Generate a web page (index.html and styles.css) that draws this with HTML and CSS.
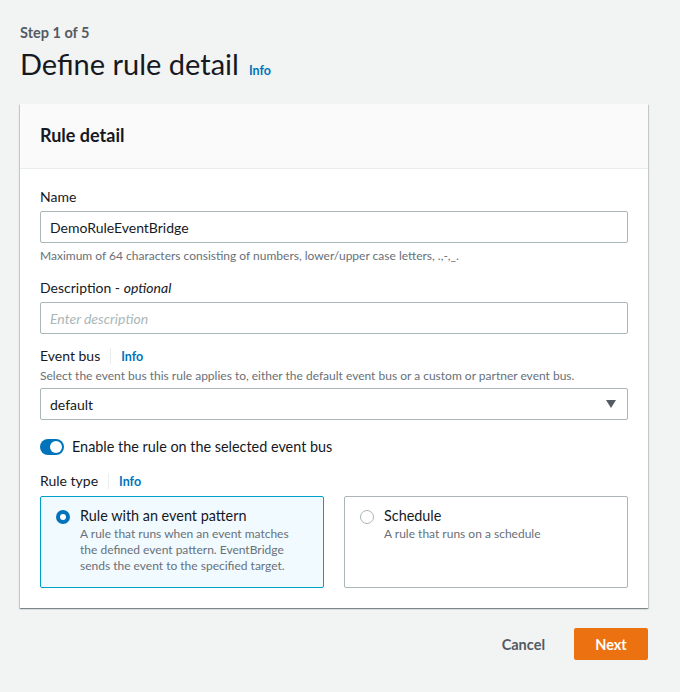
FILE: index.html
```html
<!DOCTYPE html>
<html lang="en">
<head>
<meta charset="utf-8">
<link rel="stylesheet" href="styles.css">
</head>
<body>
<div class="page">
  <div class="step">Step 1 of 5</div>
  <div class="title-row">
    <h1 class="title">Define rule detail</h1>
    <a class="info">Info</a>
  </div>

  <div class="panel">
    <div class="panel-header">
      <h2 class="panel-title">Rule detail</h2>
    </div>
    <div class="panel-body">
      <div class="field name">
        <div class="label">Name</div>
        <div class="input">DemoRuleEventBridge</div>
        <div class="hint">Maximum of 64 characters consisting of numbers, lower/upper case letters, .,-,_.</div>
      </div>

      <div class="field">
        <div class="label">Description - <i>optional</i></div>
        <div class="input placeholder">Enter description</div>
      </div>

      <div class="field">
        <div class="label-row"><span class="label">Event bus</span><span class="sep"></span><a class="info">Info</a></div>
        <div class="desc">Select the event bus this rule applies to, either the default event bus or a custom or partner event bus.</div>
        <div class="input select">
          <span>default</span>
          <svg class="caret" width="10" height="8" viewBox="0 0 10 8"><path d="M0 0h10L5 8z" fill="#545b64"/></svg>
        </div>
      </div>

      <div class="toggle-row">
        <span class="toggle"><span class="knob"></span></span>
        <span class="toggle-label">Enable the rule on the selected event bus</span>
      </div>

      <div class="field last">
        <div class="label-row"><span class="label">Rule type</span><span class="sep"></span><a class="info">Info</a></div>
        <div class="tiles">
          <div class="tile selected">
            <span class="radio on"></span>
            <div>
              <div class="tile-title">Rule with an event pattern</div>
              <div class="tile-desc">A rule that runs when an event matches the defined event pattern. EventBridge sends the event to the specified target.</div>
            </div>
          </div>
          <div class="tile">
            <span class="radio"></span>
            <div>
              <div class="tile-title">Schedule</div>
              <div class="tile-desc">A rule that runs on a schedule</div>
            </div>
          </div>
        </div>
      </div>
    </div>
  </div>

  <div class="actions">
    <a class="btn-link">Cancel</a>
    <a class="btn-primary">Next</a>
  </div>
</div>
</body>
</html>
```

FILE: styles.css
```css
* { box-sizing: border-box; }
html, body { margin: 0; padding: 0; }
body {
  background: #f2f3f3;
  font-family: Lato, "Open Sans", sans-serif;
  color: #16191f;
  font-size: 14px;
}
.page {
  width: 680px;
  padding: 24px 32px 0 20px;
}
.step {
  font-size: 14.5px;
  font-weight: 700;
  color: #545b64;
  line-height: 18px;
}
.title-row {
  display: flex;
  align-items: baseline;
  gap: 10px;
  margin-top: 4px;
}
.title {
  margin: 0;
  font-size: 29px;
  font-weight: 400;
  line-height: 36px;
  color: #16191f;
}
.info {
  color: #0073bb;
  font-size: 12.5px;
  font-weight: 700;
}
.panel {
  margin-top: 22px;
  background: #fff;
  box-shadow: 0 1px 1px 0 rgba(0,28,36,0.3), 1px 1px 1px 0 rgba(0,28,36,0.15), -1px 1px 1px 0 rgba(0,28,36,0.15);
  width: 628px;
}
.panel-header {
  background: #fafafa;
  border-bottom: 1px solid #eaeded;
  height: 65px;
  display: flex;
  align-items: center;
  padding: 0 20px;
}
.panel-title {
  margin: 0;
  font-size: 18px;
  font-weight: 700;
  line-height: 22px;
  margin-top: -2px;
}
.panel-body {
  padding: 18px 20px 20px;
}
.field { margin-bottom: 12px; }
.field.name { margin-bottom: 14px; }
.field.last { margin-bottom: 0; }
.label {
  font-size: 14px;
  line-height: 20px;
  color: #16191f;
  margin-bottom: 4px;
}
.label-row {
  display: flex;
  align-items: center;
  height: 20px;
}
.label-row .label { margin-bottom: 0; }
.sep {
  width: 1px;
  height: 16px;
  background: #eaeded;
  margin: 0 10px;
}
.input {
  height: 32px;
  border: 1px solid #aab7b8;
  border-radius: 2px;
  padding: 0 9px;
  display: flex;
  align-items: center;
  font-size: 14px;
  color: #16191f;
}
.placeholder {
  color: #aab7b8;
  font-style: italic;
}
.hint {
  font-size: 12px;
  color: #687078;
  line-height: 16px;
  margin-top: 5px;
}
.desc {
  font-size: 12px;
  color: #687078;
  line-height: 16px;
  margin: 2px 0 4px;
}
.select { justify-content: space-between; padding-right: 11px; }
.toggle-row {
  display: flex;
  align-items: center;
  gap: 8px;
  margin-top: 17px;
  margin-bottom: 14px;
}
.toggle {
  width: 24px;
  height: 16px;
  border-radius: 8px;
  background: #0073bb;
  position: relative;
}
.knob {
  position: absolute;
  right: 2px;
  top: 2px;
  width: 12px;
  height: 12px;
  border-radius: 50%;
  background: #fff;
}
.toggle-label { font-size: 14.4px; line-height: 20px; }
.tiles {
  display: grid;
  grid-template-columns: 1fr 1fr;
  gap: 20px;
  margin-top: 5px;
}
.tile {
  border: 1px solid #aab7b8;
  border-radius: 2px;
  padding: 9px 15px 11px 15px;
  display: flex;
  gap: 10px;
  min-height: 92px;
}
.tile.selected {
  border-color: #00a1c9;
  background: #f1faff;
}
.radio {
  flex: none;
  width: 14px;
  height: 14px;
  border-radius: 50%;
  border: 1px solid #aab7b8;
  background: #fff;
  margin-top: 4px;
}
.radio.on {
  border: 4px solid #0073bb;
}
.tile-title { font-size: 14.4px; line-height: 20px; color: #16191f; }
.tile-desc { font-size: 12px; line-height: 16px; color: #687078; }
.actions {
  display: flex;
  justify-content: flex-end;
  align-items: center;
  gap: 29px;
  margin-top: 20px;
  width: 628px;
}
.btn-link {
  font-size: 14.5px;
  font-weight: 700;
  color: #545b64;
}
.btn-primary {
  background: #ec7211;
  color: #fff;
  font-weight: 700;
  font-size: 14.5px;
  height: 32px;
  width: 74px;
  display: flex;
  align-items: center;
  justify-content: center;
  border-radius: 2px;
}
```
